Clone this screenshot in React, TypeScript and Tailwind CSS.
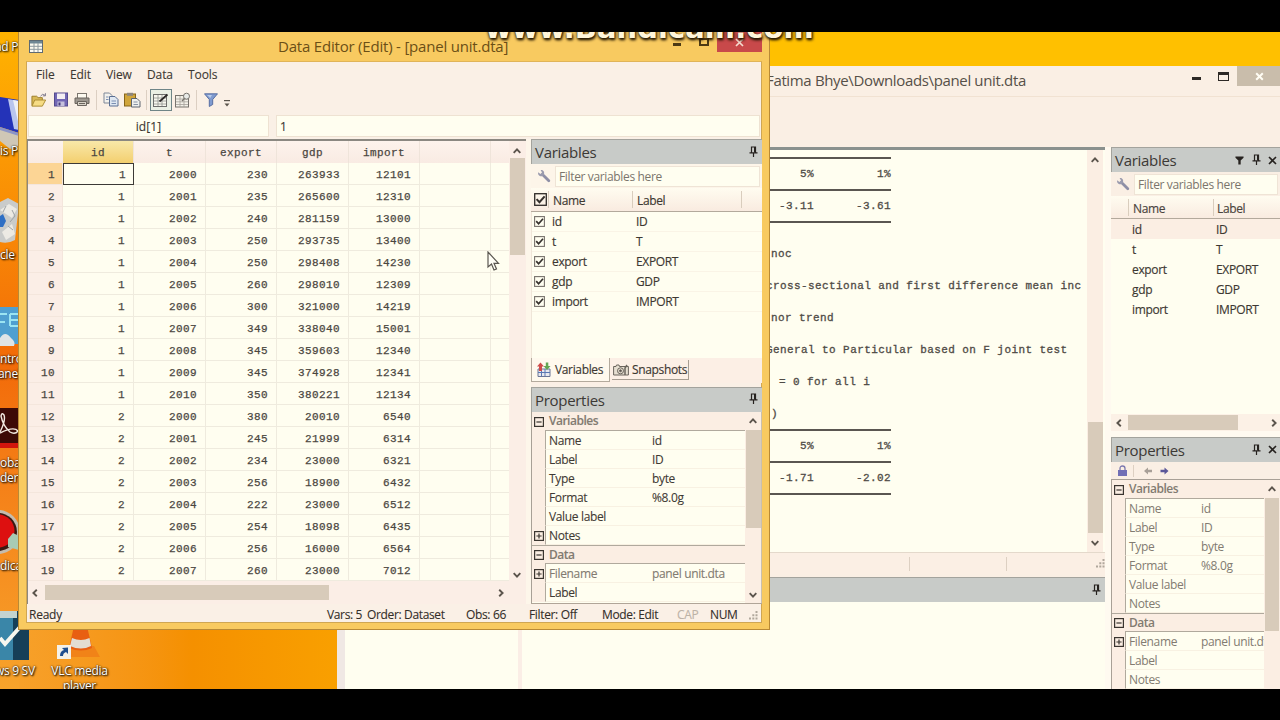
import type { ReactNode } from 'react';
import clsx from 'clsx';

const COLS = ['id', 't', 'export', 'gdp', 'import'];

const ROWS = [
  [1, 2000, 230, 263933, 12101],
  [1, 2001, 235, 265600, 12310],
  [1, 2002, 240, 281159, 13000],
  [1, 2003, 250, 293735, 13400],
  [1, 2004, 250, 298408, 14230],
  [1, 2005, 260, 298010, 12309],
  [1, 2006, 300, 321000, 14219],
  [1, 2007, 349, 338040, 15001],
  [1, 2008, 345, 359603, 12340],
  [1, 2009, 345, 374928, 12341],
  [1, 2010, 350, 380221, 12134],
  [2, 2000, 380, 20010, 6540],
  [2, 2001, 245, 21999, 6314],
  [2, 2002, 234, 23000, 6321],
  [2, 2003, 256, 18900, 6432],
  [2, 2004, 222, 23000, 6512],
  [2, 2005, 254, 18098, 6435],
  [2, 2006, 256, 16000, 6564],
  [2, 2007, 260, 23000, 7012],
];

const VARS = [['id', 'ID'], ['t', 'T'], ['export', 'EXPORT'], ['gdp', 'GDP'], ['import', 'IMPORT']];

type Prop = { k: string; v?: string; box?: '+' | '-'; group?: boolean; dim?: boolean };

const EDITOR_PROPS: Prop[] = [
  { k: 'Variables', box: '-', group: true },
  { k: 'Name', v: 'id' },
  { k: 'Label', v: 'ID' },
  { k: 'Type', v: 'byte' },
  { k: 'Format', v: '%8.0g' },
  { k: 'Value label' },
  { k: 'Notes', box: '+' },
  { k: 'Data', box: '-', group: true },
  { k: 'Filename', v: 'panel unit.dta', box: '+', dim: true },
  { k: 'Label' },
];

const MAIN_PROPS: Prop[] = [
  { k: 'Variables', box: '-', group: true },
  { k: 'Name', v: 'id', dim: true },
  { k: 'Label', v: 'ID', dim: true },
  { k: 'Type', v: 'byte', dim: true },
  { k: 'Format', v: '%8.0g', dim: true },
  { k: 'Value label', dim: true },
  { k: 'Notes', dim: true },
  { k: 'Data', box: '-', group: true },
  { k: 'Filename', v: 'panel unit.dta', box: '+', dim: true },
  { k: 'Label', dim: true },
  { k: 'Notes', dim: true },
];

const turn = { up: '', down: 'rotate-180', left: '-rotate-90', right: 'rotate-90' };

function Arrow({ dir }: { dir: keyof typeof turn }) {
  return (
    <svg className={clsx('w-[10px] h-[10px] shrink-0', turn[dir])} viewBox="0 0 10 10" fill="none" stroke="#5c554d" strokeWidth="1.9">
      <path d="M1.7 6.8 L5 3.4 L8.3 6.8" />
    </svg>
  );
}

function Pin() {
  return (
    <svg className="w-[9px] h-[11px] shrink-0" viewBox="0 0 9 11" fill="none" stroke="#26221f">
      <path d="M2.5 6.5 V1 H6.5 V6.5 M0.5 6.8 H8.5" strokeWidth="1.2" />
      <path d="M5.9 1 V6.5" strokeWidth="1.8" />
      <path d="M4.5 7 V11" strokeWidth="1.2" />
    </svg>
  );
}

function Cross() {
  return (
    <svg className="w-[9px] h-[9px] shrink-0" viewBox="0 0 9 9" stroke="#26221f" strokeWidth="1.6">
      <path d="M1 1 L8 8 M8 1 L1 8" />
    </svg>
  );
}

function Wrench() {
  return (
    <svg className="w-[14px] h-[14px] shrink-0" viewBox="0 0 14 14">
      <path d="M5.5 5.5 L11.8 11.8" stroke="#8e8fa6" strokeWidth="2.8" strokeLinecap="round" />
      <path d="M1.2 3.2 L3.4 5 L5 3.6 L3.6 1 C6 0.6 7.8 2.6 7 5.2 C6.4 7 4.4 7.8 2.8 7 C1.4 6.2 0.8 4.8 1.2 3.2Z" fill="#9a9bae" />
    </svg>
  );
}

function Check({ big }: { big?: boolean }) {
  return (
    <svg className={clsx('shrink-0', big ? 'w-[13px] h-[13px]' : 'w-[11px] h-[11px]')} viewBox="0 0 11 11" fill="none">
      <rect x="0.6" y="0.6" width="9.8" height="9.8" stroke={big ? '#2d2926' : '#77716a'} strokeWidth="1.1" />
      <path d="M2.2 5.2 L4.6 7.8 L9 2.8" stroke="#35302c" strokeWidth="1.7" />
    </svg>
  );
}

function Box({ sign }: { sign: '+' | '-' }) {
  return (
    <svg className="w-[10px] h-[10px]" viewBox="0 0 10 10" fill="none" stroke="#3a3530" strokeWidth="1.2">
      <rect x="0.6" y="0.6" width="8.8" height="8.8" />
      <path d={sign === '+' ? 'M2.4 5 H7.6 M5 2.4 V7.6' : 'M2.4 5 H7.6'} />
    </svg>
  );
}

function PanelHead({ title, children }: { title?: string; children: ReactNode }) {
  return (
    <div className="h-[25px] shrink-0 flex items-center border-t border-l border-[#a3a39d] bg-[#c8cbc8] pl-[3px] text-[15px] tracking-[-0.3px] text-[#3c3935]">
      <span className="flex-1">{title}</span>
      {children}
    </div>
  );
}

function PropGrid({ rows, wide, children }: { rows: Prop[]; wide?: boolean; children: ReactNode }) {
  return (
    <div className="flex-1 min-h-0 flex border-l border-[#a8a096] overflow-hidden">
      <div className="flex-1 min-w-0 overflow-hidden">
        {rows.map((r, i) => (
          <div key={i} className={clsx('h-[19px] flex', r.group && 'bg-[#fbeee3] border-[#b0a99d]', r.group && i > 0 && 'border-t', r.dim || r.group ? 'text-[#827b71]' : 'text-[#3f3a34]')}>
            <div className="w-[13px] shrink-0 bg-[#fbeee3] flex items-center justify-center">{r.box && <Box sign={r.box} />}</div>
            <div className={clsx('flex-1 min-w-0 flex items-center whitespace-nowrap', r.group ? 'font-semibold border-b border-[#b0a99d] pl-[4px] tracking-[-0.5px]' : 'border-l border-l-[#b0a99d] border-b border-b-[#f8f1e2] pl-[3px] pt-px')}>
              <span className={clsx('shrink-0', wide ? 'w-[103px]' : 'w-[72px]')}>{r.k}</span>
              <span>{r.v}</span>
            </div>
          </div>
        ))}
      </div>
      {children}
    </div>
  );
}

function DesktopLabel({ className, children }: { className: string; children: ReactNode }) {
  return (
    <span className={clsx('absolute whitespace-nowrap text-[12px] leading-[15px] tracking-[-0.3px] text-white [text-shadow:1px_1px_2px_#000,0_0_2px_#000]', className)}>{children}</span>
  );
}

function Desktop() {
  return (
    <>
      {/* pen-like shortcut */}
      <svg className="absolute left-0 top-[64px] w-[19px] h-[54px]" viewBox="0 0 19 54">
        <path d="M0 1 L19 4 V37 L0 31Z" fill="#2433b8" />
        <path d="M8 3 L19 5 V34 L14 33Z" fill="#b9c5ee" />
        <path d="M13 4 L19 5 V30Z" fill="#eef0f6" />
        <path d="M0 32 L19 38 V50 L10 53 L0 45Z" fill="#cfc7b6" />
        <path d="M0 31 L19 37 V40 L0 34Z" fill="#8b94c8" />
      </svg>
      {/* recycle bin */}
      <svg className="absolute left-0 top-[164px] w-[19px] h-[48px]" viewBox="0 0 19 48">
        <path d="M0 6 L8 2 L19 8 L15 44 Q8 48 0 46Z" fill="#c9cbca" />
        <path d="M0 14 L9 8 L17 13 L12 22Z M2 36 L12 28 L15 38 L6 44Z" fill="#eceae4" />
        <path d="M6 10 L3 16 M12 14 L15 20 L10 26 M8 30 L13 34" stroke="#9ea3a6" strokeWidth="1" fill="none" />
        <path d="M0 20 L3 18 L6 25 L3 31 L0 31" fill="#2e6fc4" />
      </svg>
      {/* control panel */}
      <svg className="absolute left-0 top-[274px] w-[19px] h-[42px]" viewBox="0 0 19 42">
        <rect y="1" width="19" height="37" fill="#4f9fd0" />
        <path d="M0 8 H7 M0 16 H5 M10 8 H18 M10 14 H18 M10 20 H18 M10 8 V20" stroke="#9be4f2" strokeWidth="2" fill="none" />
        <path d="M0 32 Q5 24 11 32 Q16 36 14 40 H0Z" fill="#dfe4e6" />
      </svg>
      {/* acrobat */}
      <svg className="absolute left-0 top-[376px] w-[19px] h-[40px]" viewBox="0 0 19 40">
        <rect width="19" height="40" fill="#3d0a06" />
        <rect y="35" width="19" height="5" fill="#d3150d" />
        <path d="M0 24 Q6 12 4 7 Q2 4 1 8 Q3 18 10 24 Q15 27 18 23 Q14 18 0 25" stroke="#f3e9e0" strokeWidth="1.4" fill="none" />
      </svg>
      {/* recorder */}
      <svg className="absolute left-0 top-[476px] w-[19px] h-[48px]" viewBox="0 0 19 48">
        <circle cx="-2" cy="24" r="22" fill="#c4bcae" />
        <circle cx="-2" cy="24" r="19" fill="#3b1a12" />
        <circle cx="-2" cy="23" r="16.5" fill="#dd1010" />
        <path d="M8 31 L13 25 L19 28 V42 L8 39Z" fill="#a8cbb4" />
      </svg>
      {/* windows 9 sv */}
      <svg className="absolute left-0 top-[579px] w-[29px] h-[49px]" viewBox="0 0 29 49">
        <rect width="29" height="49" fill="#163f58" />
        <rect width="13" height="49" fill="#3a86a8" />
        <rect width="17" height="7" fill="#c3d3d0" />
        <path d="M0 27 L5 33 L20 16" stroke="#f7f7ef" strokeWidth="4" fill="none" />
      </svg>
      {/* vlc cone */}
      <svg className="absolute left-[56px] top-[594px] w-[46px] h-[38px]" viewBox="0 0 46 38">
        <path d="M14 20 L38 20 L44 31 H10Z" fill="#f18318" />
        <path d="M18 0 H31 L36 22 Q25 27 13 22Z" fill="#e85f12" />
        <path d="M16 12 Q25 16 33.500 12 L35 20 Q25 25 14 20Z" fill="#e3ddd2" />
        <rect x="1" y="19" width="14" height="14" fill="#f4f1e8" />
        <path d="M4 30 Q4 25 8 24 L6 22 L12 21.500 V28 L10 26 Q7 27 7 30Z" fill="#1f4f8f" />
      </svg>
      <DesktopLabel className="top-[7px] left-[-5px]">ad P</DesktopLabel>
      <DesktopLabel className="top-[111px] left-0">is P</DesktopLabel>
      <DesktopLabel className="top-[215px] left-0">cle</DesktopLabel>
      <DesktopLabel className="top-[319px] left-0">ntrol</DesktopLabel>
      <DesktopLabel className="top-[334px] left-[-2px]">anel</DesktopLabel>
      <DesktopLabel className="top-[423px] left-0">obat</DesktopLabel>
      <DesktopLabel className="top-[438px] left-0">der D</DesktopLabel>
      <DesktopLabel className="top-[526px] left-0">dicam</DesktopLabel>
      <DesktopLabel className="top-[631px] left-[-5px]">ws 9 SV</DesktopLabel>
      <DesktopLabel className="top-[631px] left-[45px] w-[69px] text-center">VLC media</DesktopLabel>
      <DesktopLabel className="top-[646px] left-[45px] w-[69px] text-center">player</DesktopLabel>
    </>
  );
}

function Line({ children }: { children?: ReactNode }) {
  return <div className="h-[16px] flex items-center">{children}</div>;
}

function Rule() {
  return <Line><div className="w-[121px] h-[1.500px] bg-[#5a5651]" /></Line>;
}

function Pair({ a, b }: { a: string; b: string }) {
  return (
    <Line>
      <span className="w-[44px] pt-px text-right">{a}</span>
      <span className="w-[77px] pt-px text-right">{b}</span>
    </Line>
  );
}

function ResultsPane() {
  return (
    <div className="h-[405px] shrink-0 flex border-t-[3px] border-[#8a918e] bg-[#fffef0]">
      {/* the text starts behind the editor window */}
      <div className="flex-1 pl-[433px] font-['Liberation_Mono','Courier_New',monospace] text-[11px] tracking-[0.41px] text-[#4f4b46] [-webkit-text-stroke:0.3px_#4f4b46] whitespace-pre overflow-hidden">
        <Rule />
        <Pair a="5%" b="1%" />
        <Rule />
        <Pair a="-3.11" b="-3.61" />
        <Rule />
        <Line />
        <Line><span className="pt-px ml-[1px]">noc</span></Line>
        <Line />
        <Line><span className="pt-px -ml-[4px]">cross-sectional and first difference mean inc</span></Line>
        <Line />
        <Line><span className="pt-px ml-[1px]">nor trend</span></Line>
        <Line />
        <Line><span className="pt-px -ml-[4px]">General to Particular based on F joint test</span></Line>
        <Line />
        <Line><span className="pt-px -ml-[5px]">. = 0 for all i</span></Line>
        <Line />
        <Line><span className="pt-px -ml-[6px]">.)</span></Line>
        <Rule />
        <Pair a="5%" b="1%" />
        <Rule />
        <Pair a="-1.71" b="-2.02" />
        <Rule />
      </div>
      <div className="w-[16px] mr-[2px] bg-[#fbeee3] flex flex-col items-center">
        <div className="h-[19px] flex items-center"><Arrow dir="up" /></div>
        <div className="flex-1" />
        <div className="w-[15px] h-[111px] bg-[#d8cbba]" />
        <div className="h-[19px] flex items-center"><Arrow dir="down" /></div>
      </div>
    </div>
  );
}

function Grip() {
  return (
    <svg className="w-[9px] h-[9px] shrink-0" viewBox="0 0 9 9" fill="#b0a79c">
      <path d="M6.500 0h2v2h-2zM6.500 3.300h2v2h-2zM6.500 6.600h2v2h-2zM3.300 3.300h2v2h-2zM3.300 6.600h2v2h-2zM0 6.600h2v2h-2z" />
    </svg>
  );
}

function MainWindow() {
  return (
    <div className="absolute left-[337px] top-[34px] w-[943px] h-[623px] bg-[#faefe4] flex flex-col overflow-hidden">
      <div className="h-[31px] shrink-0 flex items-start border-b border-[#f1e2d2]">
        <span className="pl-[429px] pt-[3px] flex-1 text-[15px] leading-[23px] tracking-[-0.35px] text-[#565048] whitespace-nowrap">Fatima Bhye\Downloads\panel unit.dta</span>
        <div className="w-[9px] h-[3px] bg-[#2d2926] mt-[11px] mr-[17px]" />
        <div className="w-[11px] h-[9px] border border-t-[3px] border-[#2d2926] mt-[6px] mr-[8px]" />
        <div className="w-[43px] h-[20px] bg-[#c9bdab] flex items-center justify-center pl-[2px]">
          <svg className="w-[9px] h-[9px]" viewBox="0 0 9 9" stroke="#fffdf4" strokeWidth="2"><path d="M1.200 1.200 L7.800 7.800 M7.800 1.200 L1.200 7.800" /></svg>
        </div>
      </div>
      <div className="h-[50px] shrink-0" />
      <div className="flex-1 min-h-0 flex">
        {/* results + command column */}
        <div className="w-[768px] shrink-0 flex flex-col">
          <ResultsPane />
          <div className="h-[22px] shrink-0 flex items-center border-t border-[#e4d9cb] bg-[#fbefe4]">
            <div className="ml-[572px] w-px h-[14px] bg-[#ddd0c2]" />
            <div className="ml-[96px] w-px h-[14px] bg-[#ddd0c2]" />
            <div className="flex-1" />
            <Grip />
          </div>
          <div className="h-[3px] shrink-0" />
          <PanelHead><span className="mr-[4px] -mt-px"><Pin /></span></PanelHead>
          <div className="flex-1 flex">
            <div className="w-[8px] bg-[#f0e8e4]" />
            <div className="w-[173px] bg-[#fffef0]" />
            <div className="w-[4px] bg-[#fbeee6]" />
            <div className="flex-1 bg-[#fffef0]" />
          </div>
        </div>
        <div className="w-[6px] bg-[#fffaf0]" />
        {/* docked panels */}
        <div className="w-[169px] shrink-0 flex flex-col">
          <PanelHead title="Variables">
            <svg className="w-[9px] h-[9px] mr-[8px]" viewBox="0 0 10 9" fill="#26221f"><path d="M0.500 0 H9.500 V1.500 L6.300 4.500 V9 H3.700 V4.500 L0.500 1.500Z" /></svg>
            <span className="-mt-px"><Pin /></span>
            <span className="ml-[7px] mr-[3px]"><Cross /></span>
          </PanelHead>
          <div className="h-[24px] shrink-0 flex items-center pl-[5px]">
            <Wrench />
            <div className="ml-[4px] flex-1 h-[21px] bg-[#fffef0] border border-[#efe4d6] pl-[3px] leading-[20px] text-[#7b756c] mr-[2px]">Filter variables here</div>
          </div>
          <div className="h-[23px] shrink-0 flex items-center border-b border-[#b3a99c] bg-linear-to-b from-[#fffcf0] to-[#f9ebe0] text-[#4a443d] [-webkit-text-stroke:0.15px_#4a443d]">
            <span className="ml-[17px] w-[85px] h-[17px] border-l border-[#d9cdbd] pl-[4px] leading-[19px]">Name</span>
            <span className="flex-1 h-[17px] border-l border-[#d9cdbd] pl-[3px] leading-[19px]">Label</span>
          </div>
          <div className="flex-1 bg-[#fffef0] text-[#3d3832] [-webkit-text-stroke:0.15px_#3d3832]">
            {VARS.map(([n, l], i) => (
              <div key={n} className={clsx('h-[20px] flex items-center pl-[21px] pt-[2px]', i === 0 && 'bg-[#fbeee3]')}>
                <span className="w-[84px]">{n}</span>
                <span>{l}</span>
              </div>
            ))}
          </div>
          <div className="h-[17px] shrink-0 flex items-center pl-[3px] pr-[1px] bg-[#fcf1e6]">
            <Arrow dir="left" />
            <div className="ml-[4px] w-[110px] h-[15px] bg-[#d8cbba]" />
            <div className="flex-1" />
            <Arrow dir="right" />
          </div>
          <div className="h-[6px] shrink-0 bg-[#fffaf0]" />
          <PanelHead title="Properties">
            <span className="-mt-px"><Pin /></span>
            <span className="ml-[7px] mr-[3px] -mt-px"><Cross /></span>
          </PanelHead>
          <div className="h-[18px] shrink-0 flex items-center pl-[7px] border-b border-[#a8a096]">
            <svg className="w-[9px] h-[11px]" viewBox="0 0 9 11">
              <path d="M2 5 V3.500 Q2 1 4.500 1 Q7 1 7 3.500 V5" fill="none" stroke="#7c79b0" strokeWidth="1.300" />
              <rect y="5" width="9" height="6" fill="#716fb5" />
            </svg>
            <div className="ml-[6px] mr-[10px] w-px h-[12px] bg-[#ddd0c2]" />
            <svg className="w-[8px] h-[8px]" viewBox="0 0 8 8"><path d="M0 4 L4 0.500 V2.800 H8 V5.200 H4 V7.500Z" fill="#a8a098" /></svg>
            <svg className="w-[9px] h-[8px] ml-[8px]" viewBox="0 0 8 8"><path d="M8 4 L4 0.500 V2.800 H0 V5.200 H4 V7.500Z" fill="#5b5899" /></svg>
          </div>
          <div className="h-[209px] shrink-0 flex bg-[#fffef0]">
            <PropGrid rows={MAIN_PROPS}>
              <div className="w-[16px] bg-[#fbeee3] flex flex-col items-center">
                <div className="h-[18px] flex items-center"><Arrow dir="up" /></div>
                <div className="w-[14px] h-[133px] bg-[#d8cbba]" />
              </div>
            </PropGrid>
          </div>
        </div>
      </div>
    </div>
  );
}

function Toolbar() {
  return (
    <div className="h-[27px] shrink-0 flex items-center pl-[4px] pb-[2px]">
      {/* open */}
      <svg className="w-[17px] h-[16px]" viewBox="0 0 18 16">
        <path d="M1 14 V4 H6 L7.500 5.500 H12 V8" fill="#d9b956" stroke="#9a7b25" />
        <path d="M1 14.500 L4 8 H15.500 L12 14.500Z" fill="#f6dc84" stroke="#a98a31" />
        <path d="M10 4 Q12 0.500 15 3 M15.300 0.800 V3.600 H12.500" fill="none" stroke="#7a7689" />
      </svg>
      {/* save */}
      <svg className="w-[14px] h-[15px] ml-[6px]" viewBox="0 0 14 15">
        <rect x="0.500" y="1" width="13" height="13" fill="#7267b4" stroke="#544a8e" />
        <rect x="3" y="1.500" width="8" height="5.500" fill="#f3eef2" />
        <rect x="3.500" y="9.500" width="7" height="4.500" fill="#c5c0dc" />
        <rect x="4.500" y="10.500" width="2" height="3" fill="#43397d" />
      </svg>
      {/* print */}
      <svg className="w-[16px] h-[15px] ml-[6px]" viewBox="0 0 16 15">
        <rect x="3.500" y="1.500" width="9" height="5" fill="#fdfaf0" stroke="#7b756e" />
        <path d="M1 6 H15 V11.500 H1Z" fill="#9d978f" stroke="#6b655e" />
        <path d="M3.500 9.500 H12.500 V13.500 H3.500Z" fill="#d8d2c8" stroke="#6b655e" />
        <path d="M5 11.500 H11" stroke="#6b655e" />
      </svg>
      <div className="w-px h-[20px] bg-[#dccfc2] mx-[6px]" />
      {/* copy */}
      <svg className="w-[16px] h-[15px]" viewBox="0 0 16 15">
        <path d="M1 1 H6.500 L9 3.500 V11 H1Z" fill="#f3f1ec" stroke="#7e8898" />
        <path d="M6.500 4.500 H12 L15 7.500 V14 H6.500Z" fill="#dfe7f1" stroke="#5b6f93" />
        <path d="M3 5 H5.500 M3 7.500 H5.500 M8.500 9 H13 M8.500 11.500 H13" stroke="#7b8fb3" />
      </svg>
      {/* paste */}
      <svg className="w-[17px] h-[16px] ml-[5px]" viewBox="0 0 17 16">
        <rect x="0.500" y="2" width="11" height="12" fill="#d0a53b" stroke="#86651a" />
        <rect x="3" y="0.800" width="6" height="3" fill="#8d867c" />
        <path d="M7.500 6.500 H13 L16 9.500 V15 H7.500Z" fill="#eef0ee" stroke="#5c6470" />
        <path d="M9.500 10 H13.500 M9.500 12.500 H14" stroke="#8793a6" />
      </svg>
      <div className="w-px h-[20px] bg-[#dccfc2] ml-[5px] mr-[3px]" />
      {/* edit mode, pressed */}
      <div className="w-[22px] h-[22px] border border-[#6f8587] bg-[#eaf0e4] flex items-center justify-center">
        <svg className="w-[16px] h-[16px]" viewBox="0 0 16 16">
          <rect x="0.500" y="2.500" width="13" height="12" fill="#f8f8ef" stroke="#6d6f6c" />
          <path d="M1 6 H13 M1 9 H13 M1 12 H13 M5 3 V14 M9 3 V14" stroke="#8f9591" strokeWidth="0.800" />
          <path d="M6.500 9.500 L14.500 2.500" stroke="#2c2a28" strokeWidth="1.800" />
        </svg>
      </div>
      {/* browse mode */}
      <svg className="w-[16px] h-[16px] ml-[3px]" viewBox="0 0 16 16">
        <rect x="0.500" y="3.500" width="13" height="11.500" fill="#f4f1e8" stroke="#77736d" />
        <path d="M1 7 H13 M1 9.800 H13 M1 12.500 H13 M5 4 V15 M9 4 V15" stroke="#a5a19a" strokeWidth="0.800" />
        <circle cx="11.500" cy="4.200" r="3" fill="#e9ebe8" stroke="#77736d" />
        <path d="M9.500 6.500 L7 9" stroke="#77736d" strokeWidth="1.500" />
      </svg>
      <div className="w-px h-[20px] bg-[#dccfc2] ml-[5px] mr-[7px]" />
      <svg className="w-[14px] h-[14px]" viewBox="0 0 14 14">
        <path d="M0.500 0.800 H13.500 L8.700 6.500 V11.500 L5.300 13.500 V6.500Z" fill="#7f9bd0" stroke="#4f669c" strokeWidth="0.900" />
        <path d="M3 2 H8 L6.300 5Z" fill="#b9cbe8" />
      </svg>
      <svg className="w-[6px] h-[7px] ml-[6px] mt-[7px]" viewBox="0 0 6 7"><path d="M0 0.600 H6" stroke="#5a544c" strokeWidth="1.200" /><path d="M0.500 3.500 H5.500 L3 6.500Z" fill="#5a544c" /></svg>
    </div>
  );
}

function DataGrid() {
  return (
    <div className="w-[499px] shrink-0 flex flex-col border-t-2 border-l border-[#8b8881] bg-[#fbeee6]">
      <div className="h-[442px] flex">
        <div className="w-[481px] font-['Liberation_Mono','Courier_New',monospace] text-[11px] tracking-[0.41px] text-[#4b4741] [-webkit-text-stroke:0.25px_#4b4741]">
          <div className="h-[22px] flex items-center bg-linear-to-b from-[#fdf3ec] to-[#f9ebe3]">
            <div className="w-[35px] h-full shrink-0" />
            {COLS.map((c, i) => (
              <div key={c} className={clsx('h-full shrink-0 pt-[2px] border-r border-[#efe4da] flex items-center justify-center', i % 2 ? 'w-[72px]' : 'w-[71px]', i === 0 && 'bg-linear-to-b from-[#f8e8a8] to-[#f3cf6e]')}>{c}</div>
            ))}
            <div className="w-[71px] h-full shrink-0 border-r border-[#efe4da]" />
          </div>
          {ROWS.map((row, r) => (
            <div key={r} className="h-[22px] flex bg-[#fffef0]">
              <div className={clsx('w-[35px] shrink-0 pr-[7px] pt-[3px] flex items-center justify-end border-b border-r border-[#f4e6dc]', r === 0 ? 'bg-[#fcd595]' : 'bg-[#fbeee6]')}>{r + 1}</div>
              {row.map((v, i) => (
                <div key={i} className={clsx('shrink-0 flex items-center justify-end', i % 2 ? 'w-[72px]' : 'w-[71px]', r === 0 && i === 0 ? 'border border-[#3d3a36] pr-[7px] pt-[2px]' : 'border-b border-r border-[#efebde] pr-[8px] pt-[3px]')}>{v}</div>
              ))}
              <div className="w-[71px] shrink-0 border-b border-r border-[#efebde]" />
              <div className="flex-1 border-b border-[#efebde]" />
            </div>
          ))}
        </div>
        <div className="w-[16px] flex flex-col items-center">
          <div className="h-[17px] flex items-center pt-[3px]"><Arrow dir="up" /></div>
          <div className="w-[15px] h-[97px] bg-[#d8cbba]" />
          <div className="flex-1" />
          <div className="h-[16px] flex items-center"><Arrow dir="down" /></div>
        </div>
      </div>
      <div className="flex-1 flex items-center pb-[2px] pl-[2px] pr-[20px]">
        <Arrow dir="left" />
        <div className="ml-[5px] w-[284px] h-[15px] bg-[#d8cbba]" />
        <div className="flex-1" />
        <Arrow dir="right" />
      </div>
    </div>
  );
}

function SidePanels() {
  return (
    <div className="w-[231px] shrink-0 flex flex-col">
      <PanelHead title="Variables"><span className="mr-[4px] -mt-[2px]"><Pin /></span></PanelHead>
      <div className="h-[24px] shrink-0 flex items-center pl-[6px] bg-[#fdf5e9]">
        <Wrench />
        <div className="ml-[4px] mr-[2px] flex-1 h-[21px] bg-[#fffef0] border border-[#efe4d6] pl-[3px] leading-[20px] text-[#7b756c]">Filter variables here</div>
      </div>
      <div className="h-[24px] shrink-0 flex items-center border-b border-[#b3a99c] bg-linear-to-b from-[#fffcf0] to-[#f9ebe0] text-[#3d3832] pl-[3px] [-webkit-text-stroke:0.15px_#3d3832]">
        <Check big />
        <span className="ml-[1px] w-[84px] h-[17px] border-l border-[#d9cdbd] pl-[4px] leading-[19px]">Name</span>
        <span className="w-[110px] h-[17px] border-l border-r border-[#d9cdbd] pl-[4px] leading-[19px]">Label</span>
      </div>
      <div className="flex-1 bg-[#fffef0] text-[#3d3832] border-l border-[#efe6d8] [-webkit-text-stroke:0.15px_#3d3832]">
        {VARS.map(([n, l]) => (
          <div key={n} className="h-[20px] flex items-center pl-[2px] border-b border-[#faf4e6]">
            <Check />
            <span className="ml-[7px] w-[84px]">{n}</span>
            <span>{l}</span>
          </div>
        ))}
      </div>
      <div className="h-[25px] shrink-0 flex bg-[#fcefe5] text-[#3d3832] [-webkit-text-stroke:0.15px_#3d3832]">
        <div className="w-[79px] h-[24px] flex items-center pl-[5px] bg-[#fff9ee] border-l border-r border-b border-[#b3aa9d]">
          <svg className="w-[14px] h-[15px] mr-[4px]" viewBox="0 0 14 15">
            <path d="M1 7 H13 V14.500 H1Z" fill="#e8e8ee" stroke="#6b7596" />
            <path d="M4.500 7 V14 M8 7 V14 M1 10.500 H13" stroke="#5b78b4" />
            <path d="M0 4.500 L3.500 0.500 L7 4.500 H5 V9 H2 V4.500Z" fill="#cf4b4b" />
            <path d="M8.800 0.500 H11.300 V4 H13.500 L10 8 L6.600 4 H8.800Z" fill="#62a653" />
          </svg>
          Variables
        </div>
        <div className="w-[77px] h-[20px] mt-[2px] ml-[2px] flex items-center border-r border-b border-[#a79e92] bg-[#fcf0e6]">
          <svg className="w-[16px] h-[12px] mr-[3px] ml-[1px]" viewBox="0 0 16 12" fill="none" stroke="#6b655d">
            <path d="M0.600 2.500 H3 L3.500 1 H6 L6.500 2.500 H15.400 V11 H0.600Z" fill="#e6dfd1" />
            <circle cx="7.500" cy="6.800" r="3" />
            <circle cx="7.500" cy="6.800" r="1" fill="#57524b" />
            <path d="M12 11 V4 L14 1" strokeWidth="1.500" />
          </svg>
          <span className="tracking-[-0.35px]">Snapshots</span>
        </div>
      </div>
      <div className="h-[4px] shrink-0" />
      <PanelHead title="Properties"><span className="mr-[4px] -mt-[3px]"><Pin /></span></PanelHead>
      <div className="h-[192px] shrink-0 flex bg-[#fffef0] border-b border-[#b0a598] [-webkit-text-stroke:0.1px]">
        <PropGrid rows={EDITOR_PROPS} wide>
          <div className="w-[17px] bg-[#fbeee3] flex flex-col items-center border-r border-[#c9bfae]">
            <div className="h-[18px] flex items-center"><Arrow dir="up" /></div>
            <div className="w-[15px] h-[98px] bg-[#d8cbba]" />
            <div className="flex-1" />
            <div className="h-[17px] flex items-center"><Arrow dir="down" /></div>
          </div>
        </PropGrid>
      </div>
    </div>
  );
}

function DataEditor() {
  return (
    <div className="absolute left-[18px] top-0 w-[752px] h-[598px] bg-[#f8ca60] border-x border-b border-[#b98a35] px-[7px] pb-[6px] flex flex-col">
      <div className="h-[29px] shrink-0 flex items-start">
        <svg className="w-[14px] h-[13px] ml-[3px] mt-[8px]" viewBox="0 0 14 13">
          <rect x="0.500" y="0.500" width="13" height="12" fill="#fdfbf0" stroke="#5e6a72" />
          <rect x="1" y="1" width="12" height="2.500" fill="#6f8794" />
          <path d="M1 6.300 H13 M1 9.300 H13 M5 3 V12 M9 3 V12" stroke="#8e9a9f" />
        </svg>
        <span className="ml-[235px] pt-[3px] flex-1 text-[15px] leading-[23px] tracking-[-0.2px] text-[#6b4f16] whitespace-nowrap">Data Editor (Edit) - [panel unit.dta]</span>
        <div className="w-[8px] h-[3px] bg-[#4d3a14] mt-[11px] mr-[18px]" />
        <div className="w-[10px] h-[8px] border-2 border-[#4d3a14] mt-[6px] mr-[8px]" />
        <div className="w-[45px] h-[20px] bg-[#c8494a] flex items-center justify-center">
          <svg className="w-[9px] h-[9px]" viewBox="0 0 9 9" stroke="#f6dcd0" strokeWidth="1.700"><path d="M1 1 L8 8 M8 1 L1 8" /></svg>
        </div>
      </div>
      <div className="flex-1 min-h-0 bg-[#faf0e6] border border-t-[#e0b458] border-[#cfa653] flex flex-col">
        <div className="h-[25px] shrink-0 flex items-center pt-px text-[#3d3832] tracking-[-0.1px] [-webkit-text-stroke:0.1px_#3d3832]">
          <span className="ml-[9px] w-[34px]">File</span>
          <span className="w-[36px]">Edit</span>
          <span className="w-[41px]">View</span>
          <span className="w-[41px]">Data</span>
          <span>Tools</span>
        </div>
        <Toolbar />
        <div className="h-[22px] shrink-0 flex pl-[1px] mt-px [-webkit-text-stroke:0.1px_#3a352f]">
          <div className="w-[241px] text-center leading-[21px] bg-[#fffef0] border border-[#eee2d2] tracking-[0.1px] text-[#3a352f]">id[1]</div>
          <div className="ml-[7px] mr-[1px] flex-1 pl-[3px] leading-[21px] bg-[#fffef0] border border-[#eee2d2] text-[#3a352f]">1</div>
        </div>
        <div className="h-[465px] shrink-0 flex mt-[2px]">
          <DataGrid />
          <div className="w-[5px] shrink-0 bg-[#fdf6ea]" />
          <SidePanels />
        </div>
        <div className="flex-1 flex items-center pt-[2px] text-[#332e29] whitespace-nowrap [-webkit-text-stroke:0.1px]">
          <span className="ml-[2px] w-[298px] tracking-[-0.25px]">Ready</span>
          <span className="w-[40px]">Vars: 5</span>
          <span className="w-[99px]">Order: Dataset</span>
          <span className="w-[63px]">Obs: 66</span>
          <span className="w-[73px]">Filter: Off</span>
          <span className="w-[75px]">Mode: Edit</span>
          <span className="w-[33px] text-[#bdb3a6]">CAP</span>
          <span className="flex-1">NUM</span>
          <span className="mr-[3px]"><Grip /></span>
        </div>
      </div>
    </div>
  );
}

export default function App() {
  return (
    <div className="w-[1280px] h-[720px] bg-black py-[32px] pb-[31px] overflow-hidden font-['Open_Sans','Noto_Sans',sans-serif] text-[12px] tracking-[-0.35px]">
      <div className="relative h-[657px] overflow-hidden bg-linear-to-r from-[#f7a22c] from-0% via-[#f59000] via-15% to-[#ffc000] to-50%">
        <div className="absolute left-0 top-0 w-[19px] h-[657px] bg-linear-to-b from-[#ffb300] via-[#f26a08] to-[#f7a32b]" />
        <Desktop />
        <MainWindow />
        <DataEditor />
        {/* recorder watermark */}
        <div className="absolute left-[485px] top-[-21px] text-[29px] leading-[34px] font-bold tracking-[0.05px] text-[#fff6da] whitespace-nowrap font-['DejaVu_Sans',sans-serif] [text-shadow:1px_2px_3px_#1f1400,0_1px_3px_#3a2500]">www.Bandicam.com</div>
        <svg className="absolute left-[487px] top-[219px] w-[13px] h-[21px]" viewBox="0 0 13 21">
          <path d="M1 1 V16 L4.500 13 L7 19 L9.500 18 L7 12.300 H11.500Z" fill="#fffef6" stroke="#5a5650" strokeWidth="1.200" />
        </svg>
      </div>
    </div>
  );
}
